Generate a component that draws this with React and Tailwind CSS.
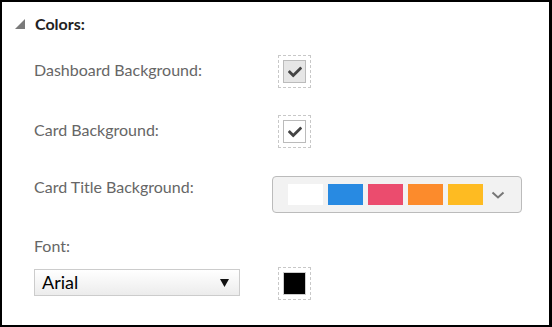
import React from "react";
import { FaCheck } from "react-icons/fa";

function Check() {
  return <FaCheck size={14} color="#444" />;
}

function Dashed({ children }) {
  return (
    <div className="w-[33px] h-[33px] border border-dashed border-[#c8c8c8] flex items-center justify-center">
      {children}
    </div>
  );
}

export default function App() {
  const font = { fontFamily: "Lato, 'Open Sans', sans-serif" };
  return (
    <div
      className="w-[552px] h-[327px] bg-white border-black border-t-2 border-l-2 border-r-[3px] border-b-2 box-border overflow-hidden"
      style={font}
    >
      <div className="flex items-center h-[20px] mt-[12px] pl-[13px]">
        <svg width="10" height="10" viewBox="0 0 10 10" className="mt-[-1px]">
          <polygon points="10,0 10,10 0,10" fill="#7a7a7a" />
        </svg>
        <span className="ml-[10px] text-[16px] font-bold text-[#222] leading-[20px]">Colors:</span>
      </div>

      <div className="pl-[32px]">
        <div className="flex items-start mt-[21px] h-[33px]">
          <div className="w-[244px] mt-[5px] text-[16px] leading-[20px] text-[#666]">Dashboard Background:</div>
          <Dashed>
            <div className="w-[23px] h-[23px] border border-[#bbb] bg-[#e6e6e6] flex items-center justify-center">
              <Check />
            </div>
          </Dashed>
        </div>

        <div className="flex items-start mt-[27px] h-[34px]">
          <div className="w-[244px] mt-[5px] text-[16px] leading-[20px] text-[#666]">Card Background:</div>
          <Dashed>
            <div className="w-[23px] h-[23px] border border-[#bbb] bg-white flex items-center justify-center">
              <Check />
            </div>
          </Dashed>
        </div>

        <div className="flex items-start mt-[27px] h-[37px]">
          <div className="w-[238px] mt-[1px] text-[16px] leading-[20px] text-[#666]">Card Title Background:</div>
          <div className="w-[250px] h-[37px] border border-[#bbb] rounded-[4px] bg-[#f2f2f2] flex items-center pl-[15px]">
            <div className="flex gap-[5px]">
              <div className="w-[35px] h-[21px] bg-white" />
              <div className="w-[35px] h-[21px] bg-[#288ae2]" />
              <div className="w-[35px] h-[21px] bg-[#eb4c6e]" />
              <div className="w-[35px] h-[21px] bg-[#fc8b2c]" />
              <div className="w-[35px] h-[21px] bg-[#febb22]" />
            </div>
            <svg width="14" height="8" viewBox="0 0 14 8" className="ml-[8px]">
              <path d="M1.5 1.5 L7 6.5 L12.5 1.5" fill="none" stroke="#777" strokeWidth="2" />
            </svg>
          </div>
        </div>

        <div className="mt-[23px] h-[20px] text-[16px] leading-[20px] text-[#666]">Font:</div>

        <div className="flex items-start mt-[11px]">
          <div className="w-[206px] h-[27px] mt-[2px] border border-[#ccc] bg-gradient-to-b from-white to-[#ececec] flex items-center justify-between pl-[7px] pr-[10px]">
            <span className="text-[18px] text-black leading-[20px] mb-[2px]">Arial</span>
            <svg width="9" height="8" viewBox="0 0 9 8">
              <polygon points="0,0 9,0 4.5,8" fill="#111" />
            </svg>
          </div>
          <div className="ml-[38px]">
            <Dashed>
              <div className="w-[23px] h-[23px] border border-[#ccc] bg-black" />
            </Dashed>
          </div>
        </div>
      </div>
    </div>
  );
}
